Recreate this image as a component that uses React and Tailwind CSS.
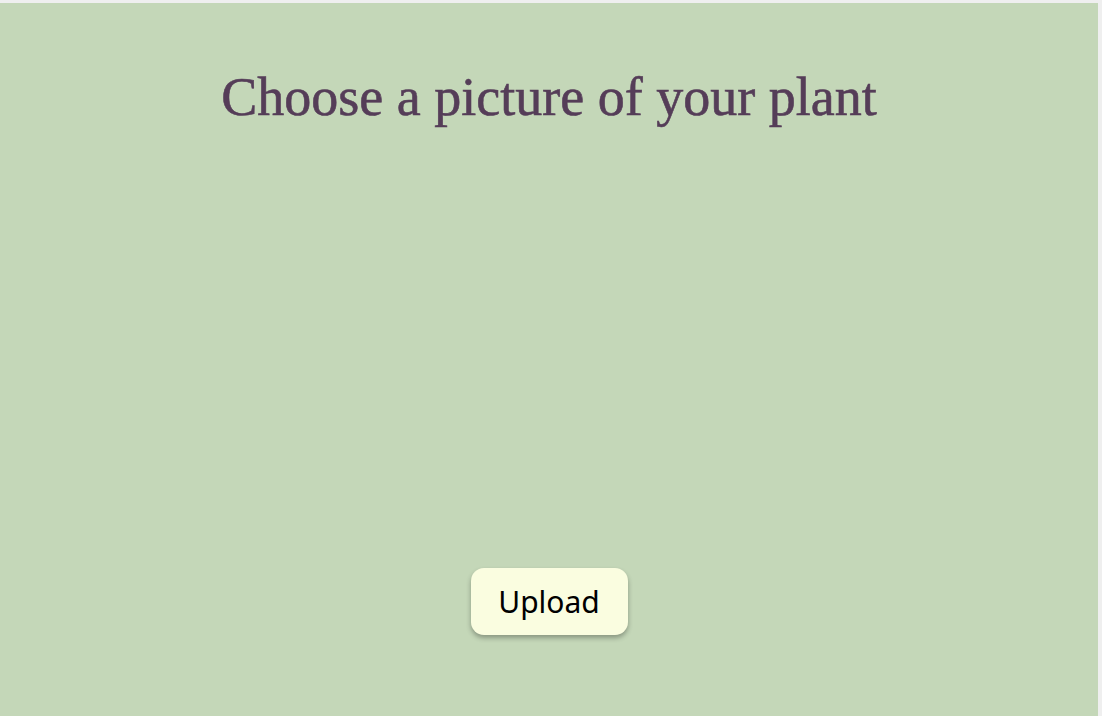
import React from 'react';

function App() {
  return (
    <div className="w-[1102px] h-[716px] bg-[#efefef] pt-[3px] pr-[4px]">
      <div className="h-full bg-[#c4d7b8] flex flex-col items-center">
        <h1 className="mt-[59px] text-[54px] leading-[70px] text-[#553d58] font-['Liberation_Serif',serif] [-webkit-text-stroke:0.6px_#553d58]">
          Choose a picture of your plant
        </h1>
        <button className="mt-[436px] w-[157px] h-[67px] rounded-[13px] bg-[#fafde0] shadow-[0_3px_5px_rgba(0,0,0,0.3)] text-[30px] text-black font-['Noto_Sans',sans-serif]">
          Upload
        </button>
      </div>
    </div>
  );
}

export default App;
